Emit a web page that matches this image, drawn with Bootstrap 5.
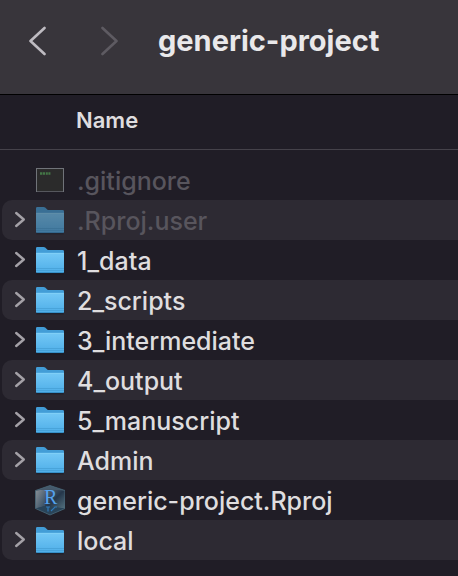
<!DOCTYPE html>
<html lang="en" data-bs-theme="dark">
<head>
<meta charset="utf-8">
<meta name="viewport" content="width=device-width, initial-scale=1">
<title>generic-project</title>
<link href="https://cdn.jsdelivr.net/npm/bootstrap@5.3.0/dist/css/bootstrap.min.css" rel="stylesheet">
<style>
  body { background: #201d26; color: #dfdddf; font-family: Inter, "Liberation Sans", sans-serif; }
  .toolbar { background: #38353b; border-bottom: 1px solid #000; height: 95px; padding: 0 28px 12px; }
  .nav-btn { color: #bebbc1; line-height: 0; }
  .nav-btn:disabled { color: #5e5b62; }
  .nav-gap { gap: 55px; }
  .folder-title { font-size: 29px; line-height: 36px; font-weight: 700; color: #e9e8ea; margin-left: 39px; }
  .sort-btn { color: #dfdddf; font-size: 22px; line-height: 28px; font-weight: 600; height: 55px; padding: 0 0 4px 76px; margin-bottom: 10px; border-bottom: 1px solid #45424a; }
  .file-cell { padding: 0 0 0 2px; }
  .file-row { height: 40px; padding-left: 12px; border-radius: 10px 0 0 10px; font-size: 25px; line-height: 32px; font-weight: 500; }
  .file-name { padding-top: 2px; }
  tr:nth-child(even) .file-row { background: #2d2a33; }
  .disclose { width: 12px; height: 18px; color: #a4a1a7; line-height: 0; }
  .file-icon { width: 30px; height: 32px; margin: 0 12px 0 9px; }
  .dimmed { color: #58555d; }
  .dimmed .file-icon { opacity: .6; }
</style>
<script src="https://cdn.jsdelivr.net/npm/bootstrap@5.3.0/dist/js/bootstrap.bundle.min.js"></script>
</head>
<body>
<svg width="0" height="0" class="position-absolute" aria-hidden="true">
  <defs>
    <linearGradient id="front" x1="0" y1="0" x2="0" y2="1">
      <stop offset="0" stop-color="#74c8f6"/><stop offset="1" stop-color="#4eaee8"/>
    </linearGradient>
    <linearGradient id="cubeLeft" x1="0" y1="0" x2="1" y2="1">
      <stop offset="0" stop-color="#8b9197"/><stop offset="1" stop-color="#2e4960"/>
    </linearGradient>
    <linearGradient id="cubeRight" x1="0" y1="0" x2="1" y2="1">
      <stop offset="0" stop-color="#5c6b7c"/><stop offset=".5" stop-color="#25374b"/><stop offset="1" stop-color="#53717f"/>
    </linearGradient>
    <symbol id="chevron" viewBox="0 0 12 18">
      <path d="M2.200 2L9.800 8.500L2.200 15" fill="none" stroke="currentColor" stroke-width="2.400" stroke-linecap="round" stroke-linejoin="round"/>
    </symbol>
    <symbol id="folder" viewBox="0 0 30 32">
      <path d="M1.500 29.500h27" stroke="#15121a" stroke-width="1.600" opacity=".6"/>
      <path d="M1 4.200Q1 3 2.200 3h6.300q1 0 1.700.6l2 1.800q.6.6 1.500.6H27.500Q29 6 29 7.200V12H1z" fill="#429dd7"/>
      <path d="M1 9.500Q1 9 1.600 9H28.400Q29 9 29 9.600V27.800Q29 29 27.800 29H2.200Q1 29 1 27.800z" fill="url(#front)"/>
      <path d="M1 9.300h28" stroke="#86d3f8" stroke-width=".8"/>
      <path d="M1 24.500h28M1 26.500h28" stroke="#439dd3" stroke-width=".9" opacity=".75"/>
      <path d="M1.500 28.600h27" stroke="#2f86bd" stroke-width=".8"/>
    </symbol>
    <symbol id="exec" viewBox="0 0 30 32">
      <rect x="1.500" y="4.500" width="27" height="23" fill="#33352f" stroke="#a5adb0"/>
      <path d="M2 27.500h26" stroke="#7a7f82"/>
      <path d="M5 9.500h2.400M8 9.500h2M10.800 9.500h2M13.400 9.500h2" stroke="#5cb45c" stroke-width="2.400"/>
    </symbol>
    <symbol id="rproj" viewBox="0 0 30 32">
      <path d="M15 1.500L30 6.500V24.500L15 31L.5 24.500V6.500z" fill="#2b3c4e"/>
      <path d="M.5 6.500L10 5.500V22L.5 24.500z" fill="url(#cubeLeft)"/>
      <path d="M10 5.500L30 6.500V24.500L10 22z" fill="url(#cubeRight)"/>
      <path d="M15 1.500L30 6.500L10 5.500L.5 6.500z" fill="#4c6274" opacity=".8"/>
      <path d="M.5 24.500L10 22L30 24.500L15 31z" fill="#29465c" opacity=".8"/>
      <path d="M15 1.500L30 6.500V24.500L15 31L.5 24.500V6.500z" fill="none" stroke="#496879" stroke-width=".8"/>
      <path d="M11 23h4M13 23v4.500M16 27l4-4h2" stroke="#2f78b8" stroke-width="1.200" fill="none"/>
      <text x="9" y="20" font-family="Liberation Serif, serif" font-weight="400" font-size="20" fill="#54a2ee">R</text>
    </symbol>
  </defs>
</svg>

<header class="toolbar d-flex align-items-center">
  <nav class="d-flex nav-gap" aria-label="History">
    <button type="button" class="nav-btn btn p-0 border-0" aria-label="Back">
      <svg width="18" height="30" viewBox="0 0 18 30"><path d="M16.500 2L2.500 15L16.500 28" fill="none" stroke="currentColor" stroke-width="2.600" stroke-linecap="round" stroke-linejoin="round"/></svg>
    </button>
    <button type="button" class="nav-btn btn p-0 border-0 opacity-100" aria-label="Forward" disabled>
      <svg width="18" height="30" viewBox="0 0 18 30"><path d="M1.500 2L15.500 15L1.500 28" fill="none" stroke="currentColor" stroke-width="2.600" stroke-linecap="round" stroke-linejoin="round"/></svg>
    </button>
  </nav>
  <h1 class="folder-title mb-0 text-nowrap">generic-project</h1>
</header>

<main>
  <table class="w-100">
    <thead>
      <tr><th scope="col" class="p-0"><button type="button" class="sort-btn btn w-100 text-start rounded-0 border-top-0 border-start-0 border-end-0">Name</button></th></tr>
    </thead>
    <tbody>
      <tr><td class="file-cell"><div class="file-row dimmed d-flex align-items-center"><span class="disclose"></span><svg class="file-icon flex-shrink-0"><use href="#exec"/></svg><span class="file-name">.gitignore</span></div></td></tr>
      <tr><td class="file-cell"><div class="file-row dimmed d-flex align-items-center"><button type="button" class="disclose btn p-0 border-0" aria-label="Expand .Rproj.user"><svg width="12" height="18"><use href="#chevron"/></svg></button><svg class="file-icon flex-shrink-0"><use href="#folder"/></svg><span class="file-name">.Rproj.user</span></div></td></tr>
      <tr><td class="file-cell"><div class="file-row d-flex align-items-center"><button type="button" class="disclose btn p-0 border-0" aria-label="Expand 1_data"><svg width="12" height="18"><use href="#chevron"/></svg></button><svg class="file-icon flex-shrink-0"><use href="#folder"/></svg><span class="file-name">1_data</span></div></td></tr>
      <tr><td class="file-cell"><div class="file-row d-flex align-items-center"><button type="button" class="disclose btn p-0 border-0" aria-label="Expand 2_scripts"><svg width="12" height="18"><use href="#chevron"/></svg></button><svg class="file-icon flex-shrink-0"><use href="#folder"/></svg><span class="file-name">2_scripts</span></div></td></tr>
      <tr><td class="file-cell"><div class="file-row d-flex align-items-center"><button type="button" class="disclose btn p-0 border-0" aria-label="Expand 3_intermediate"><svg width="12" height="18"><use href="#chevron"/></svg></button><svg class="file-icon flex-shrink-0"><use href="#folder"/></svg><span class="file-name">3_intermediate</span></div></td></tr>
      <tr><td class="file-cell"><div class="file-row d-flex align-items-center"><button type="button" class="disclose btn p-0 border-0" aria-label="Expand 4_output"><svg width="12" height="18"><use href="#chevron"/></svg></button><svg class="file-icon flex-shrink-0"><use href="#folder"/></svg><span class="file-name">4_output</span></div></td></tr>
      <tr><td class="file-cell"><div class="file-row d-flex align-items-center"><button type="button" class="disclose btn p-0 border-0" aria-label="Expand 5_manuscript"><svg width="12" height="18"><use href="#chevron"/></svg></button><svg class="file-icon flex-shrink-0"><use href="#folder"/></svg><span class="file-name">5_manuscript</span></div></td></tr>
      <tr><td class="file-cell"><div class="file-row d-flex align-items-center"><button type="button" class="disclose btn p-0 border-0" aria-label="Expand Admin"><svg width="12" height="18"><use href="#chevron"/></svg></button><svg class="file-icon flex-shrink-0"><use href="#folder"/></svg><span class="file-name">Admin</span></div></td></tr>
      <tr><td class="file-cell"><div class="file-row d-flex align-items-center"><span class="disclose"></span><svg class="file-icon flex-shrink-0"><use href="#rproj"/></svg><span class="file-name">generic-project.Rproj</span></div></td></tr>
      <tr><td class="file-cell"><div class="file-row d-flex align-items-center"><button type="button" class="disclose btn p-0 border-0" aria-label="Expand local"><svg width="12" height="18"><use href="#chevron"/></svg></button><svg class="file-icon flex-shrink-0"><use href="#folder"/></svg><span class="file-name">local</span></div></td></tr>
    </tbody>
  </table>
</main>
</body>
</html>
